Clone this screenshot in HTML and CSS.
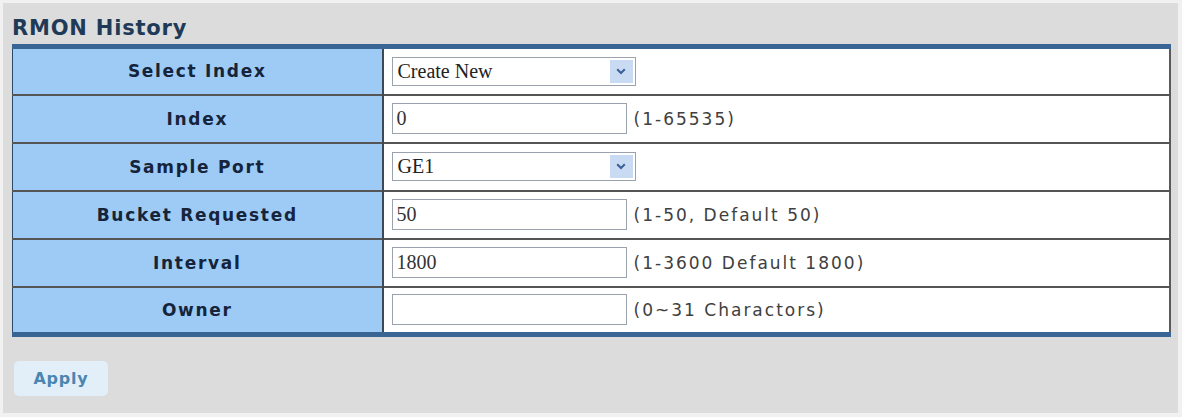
FILE: index.html
```html
<!DOCTYPE html>
<html lang="en">
<head>
    <meta charset="UTF-8">
    <title>RMON History</title>
    <link rel="stylesheet" href="styles.css">
</head>
<body>
    <div class="panel">
        <h2 class="title">RMON History</h2>
        <table class="form-table">
            <tr>
                <td class="label">Select Index</td>
                <td class="field">
                    <div class="select">
                        <span class="select-text">Create New</span>
                        <span class="select-arrow">
                            <svg width="10" height="7" viewBox="0 0 10 7"><path d="M1.2 1.2 L5 5 L8.8 1.2" fill="none" stroke="#3b5f9a" stroke-width="2"/></svg>
                        </span>
                    </div>
                </td>
            </tr>
            <tr>
                <td class="label">Index</td>
                <td class="field">
                    <div class="textbox">0</div>
                    <span class="hint">(1-65535)</span>
                </td>
            </tr>
            <tr>
                <td class="label">Sample Port</td>
                <td class="field">
                    <div class="select">
                        <span class="select-text">GE1</span>
                        <span class="select-arrow">
                            <svg width="10" height="7" viewBox="0 0 10 7"><path d="M1.2 1.2 L5 5 L8.8 1.2" fill="none" stroke="#3b5f9a" stroke-width="2"/></svg>
                        </span>
                    </div>
                </td>
            </tr>
            <tr>
                <td class="label">Bucket Requested</td>
                <td class="field">
                    <div class="textbox">50</div>
                    <span class="hint">(1-50, Default 50)</span>
                </td>
            </tr>
            <tr>
                <td class="label">Interval</td>
                <td class="field">
                    <div class="textbox">1800</div>
                    <span class="hint">(1-3600 Default 1800)</span>
                </td>
            </tr>
            <tr>
                <td class="label">Owner</td>
                <td class="field">
                    <div class="textbox"></div>
                    <span class="hint">(0~31 Charactors)</span>
                </td>
            </tr>
        </table>
        <button class="apply">Apply</button>
    </div>
</body>
</html>
```

FILE: styles.css
```css
* {
    margin: 0;
    padding: 0;
    box-sizing: border-box;
}

body {
    background: #f1f1f1;
    font-family: "DejaVu Sans", sans-serif;
    padding: 3px 4px 4px 3px;
}

.panel {
    background: #dcdcdc;
    height: 410px;
    padding: 12px 8px 0 9px;
}

.title {
    font-size: 21px;
    font-weight: bold;
    color: #1f3a56;
    letter-spacing: 0.8px;
    line-height: 26px;
    height: 29px;
}

.form-table {
    width: 1159px;
    border-collapse: collapse;
    border-top: 5px solid #386593;
    border-bottom: 5px solid #386593;
    border-left: 1px solid #2b4a6a;
    border-right: 2px solid #5a5a5a;
}

.form-table tr + tr td {
    border-top: 2px solid #555;
}

.label {
    width: 370px;
    height: 48px;
    background: #9dcbf6;
    border-right: 2px solid #3c4a58;
    text-align: center;
    font-size: 17px;
    font-weight: bold;
    letter-spacing: 1.7px;
    color: #15243a;
}

.field {
    background: #fff;
    padding-left: 8px;
    vertical-align: middle;
}

.field > * {
    vertical-align: middle;
}

.select {
    display: inline-flex;
    align-items: center;
    width: 244px;
    height: 29px;
    border: 1px solid #9aa3ad;
    background: #fff;
    padding: 2px 2px 2px 5px;
}

.select-text {
    flex: 1;
    font-family: "Liberation Serif", serif;
    font-size: 20px;
    color: #222;
}

.select-arrow {
    display: flex;
    align-items: center;
    justify-content: center;
    width: 23px;
    height: 100%;
    background: #c9dbf3;
}

.textbox {
    display: inline-block;
    width: 235px;
    height: 31px;
    border: 1px solid #9aa3ad;
    padding: 0 4px;
    font-family: "Liberation Serif", serif;
    font-size: 20px;
    line-height: 29px;
    color: #333;
}

.hint {
    display: inline-block;
    margin-left: 2px;
    font-size: 17px;
    letter-spacing: 2px;
    color: #404040;
}

.apply {
    margin-top: 24px;
    margin-left: 2px;
    width: 94px;
    height: 35px;
    border: none;
    border-radius: 5px;
    background: #e2eff9;
    font-family: "DejaVu Sans", sans-serif;
    font-size: 16px;
    font-weight: bold;
    letter-spacing: 0.8px;
    color: #4a86b1;
}
```
